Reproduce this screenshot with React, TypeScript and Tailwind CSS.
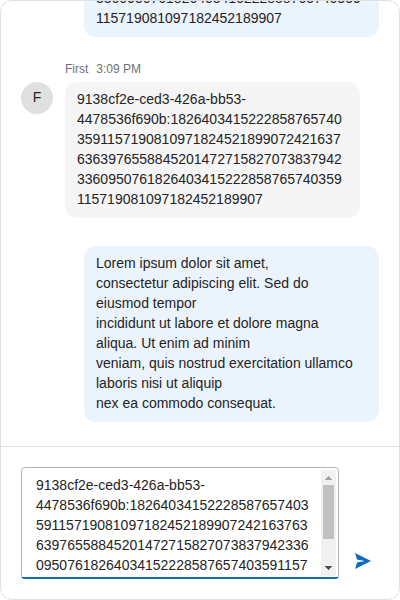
const longMessage = [
  '9138cf2e-ced3-426a-bb53-',
  '4478536f690b:1826403415222858765740',
  '3591157190810971824521899072421637',
  '6363976558845201472715827073837942',
  '3360950761826403415222858765740359',
  '115719081097182452189907',
];

const loremMessage = [
  'Lorem ipsum dolor sit amet,',
  'consectetur adipiscing elit. Sed do',
  'eiusmod tempor',
  'incididunt ut labore et dolore magna',
  'aliqua. Ut enim ad minim',
  'veniam, quis nostrud exercitation ullamco',
  'laboris nisi ut aliquip',
  'nex ea commodo consequat.',
];

const draft = [
  '9138cf2e-ced3-426a-bb53-',
  '4478536f690b:18264034152228587657403',
  '59115719081097182452189907242163763',
  '63976558845201472715827073837942336',
  '09507618264034152228587657403591157',
];

function Lines({ lines }: { lines: string[] }) {
  return (
    <>
      {lines.map((line, i) => (
        <div key={i} className="whitespace-nowrap">
          {line}
        </div>
      ))}
    </>
  );
}

function Bubble({ lines, own = false }: { lines: string[]; own?: boolean }) {
  return (
    <div
      className={`w-[295px] shrink-0 rounded-xl px-3 pt-[7px] pb-[9px] ${own ? 'self-end bg-[#ebf3fc]' : 'bg-[#f5f5f5]'}`}
    >
      <Lines lines={lines} />
    </div>
  );
}

function Scrollbar() {
  return (
    <div className="my-0.5 mr-0.5 flex w-[15px] shrink-0 flex-col items-center bg-[#f1f1f1]">
      <svg className="h-[15px] w-[15px] shrink-0" viewBox="0 0 15 15" shapeRendering="crispEdges">
        <path d="M7 6h1v1h1v1h1v1h1v1H4V9h1V8h1V7h1z" fill="#a3a3a3" />
      </svg>
      <div className="h-[54px] w-[11px] bg-[#c1c1c1]" />
      <svg className="mt-auto h-[15px] w-[15px] shrink-0" viewBox="0 0 15 15" shapeRendering="crispEdges">
        <path d="M4 5h7v1h-1v1H9v1H8v1H7V8H6V7H5V6H4z" fill="#505050" />
      </svg>
    </div>
  );
}

export default function App() {
  return (
    <div className="flex h-[600px] w-[400px] flex-col overflow-hidden rounded-xl border border-[#e0e0e0] bg-white font-['Liberation_Sans',Arial,sans-serif] text-sm leading-5 text-[#242424]">
      <div className="flex h-[445px] shrink-0 flex-col justify-end overflow-hidden px-5 pb-6">
        <Bubble lines={longMessage} own />
        <div className="mt-6 flex shrink-0 gap-2 pl-11 text-xs leading-4 text-[#707070]">
          <span>First</span>
          <span>3:09 PM</span>
        </div>
        <div className="mt-[5px] flex shrink-0 items-start gap-3">
          <div className="flex size-8 items-center justify-center rounded-full bg-[#e0e0e0] pb-0.5">F</div>
          <Bubble lines={longMessage} />
        </div>
        <div className="mt-7 flex shrink-0 flex-col">
          <Bubble lines={loremMessage} own />
        </div>
      </div>
      <div className="flex flex-1 items-start gap-4 border-t border-[#e0e0e0] px-5 pt-5">
        <div className="relative h-28 w-[318px]">
          <div className="flex h-full rounded border border-[#b3b3b3]">
            <div className="mt-[7px] h-[101px] flex-1 overflow-hidden pl-3.5">
              <Lines lines={draft} />
            </div>
            <Scrollbar />
          </div>
          <div className="absolute inset-x-0 bottom-0 h-1 overflow-hidden rounded-b">
            <div className="mt-0.5 h-0.5 bg-[#0f6cbd]" />
          </div>
        </div>
        <svg className="mt-[86px] size-4 shrink-0" viewBox="0 0 16 16">
          <path
            d="M0 0 16 8 0 16 1.9 9.9Q2.1 9.4 2.6 9.3L9 8.3Q9.4 8 9 7.7L2.6 6.7Q2.1 6.6 1.9 6.1Z"
            fill="#0f6cbd"
          />
        </svg>
      </div>
    </div>
  );
}
